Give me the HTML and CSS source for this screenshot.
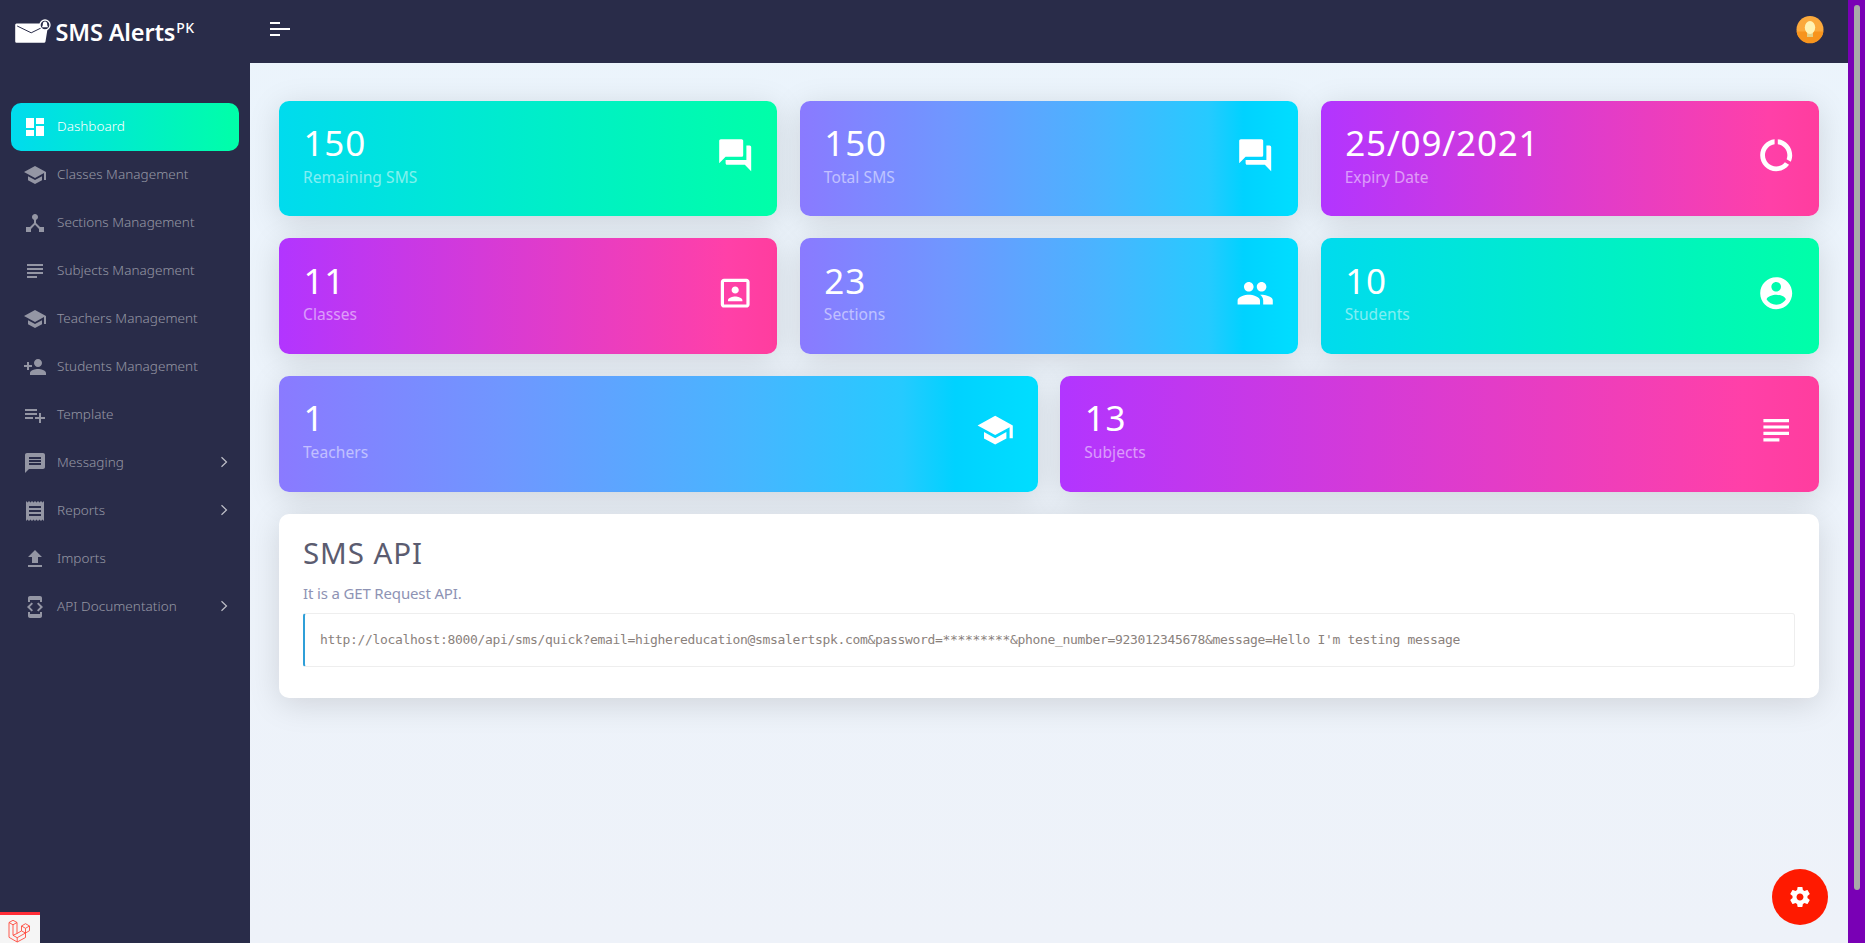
FILE: index.html
```html
<!DOCTYPE html>
<html lang="en">
<head>
<meta charset="utf-8">
<title>SMS Alerts PK</title>
<link rel="stylesheet" href="styles.css">
</head>
<body>
<svg class="defs" width="0" height="0">
  <symbol id="i-dashboard" viewBox="0 0 24 24"><path d="M3 13h8V3H3v10zm0 8h8v-6H3v6zm10 0h8V11h-8v10zm0-18v6h8V3h-8z"/></symbol>
  <symbol id="i-school" viewBox="0 0 24 24"><path d="M5 13.18v4L12 21l7-3.82v-4L12 17l-7-3.82zM12 3L1 9l11 6 9-4.91V17h2V9L12 3z"/></symbol>
  <symbol id="i-hub" viewBox="0 0 24 24"><path d="M17 16l-4-4V8.82C14.16 8.4 15 7.3 15 6c0-1.66-1.34-3-3-3S9 4.340 9 6c0 1.3.84 2.4 2 2.820V12l-4 4H3v5h5v-3.050l4-4.200 4 4.200V21h5v-5h-4z"/></symbol>
  <symbol id="i-subject" viewBox="0 0 24 24"><path d="M14 17H4v2h10v-2zm6-8H4v2h16V9zM4 15h16v-2H4v2zM4 5v2h16V5H4z"/></symbol>
  <symbol id="i-add-person" viewBox="0 0 24 24"><path d="M15 12c2.210 0 4-1.790 4-4s-1.790-4-4-4-4 1.790-4 4 1.790 4 4 4zm-9-2V7H4v3H1v2h3v3h2v-3h3v-2H6zm9 4c-2.670 0-8 1.340-8 4v2h16v-2c0-2.660-5.330-4-8-4z"/></symbol>
  <symbol id="i-list-add" viewBox="0 0 24 24"><path d="M14 10H2v2h12v-2zm0-4H2v2h12V6zm4 8v-4h-2v4h-4v2h4v4h2v-4h4v-2h-4zM2 16h8v-2H2v2z"/></symbol>
  <symbol id="i-message" viewBox="0 0 24 24"><path d="M20 2H4c-1.100 0-1.990.9-1.990 2L2 22l4-4h14c1.100 0 2-.9 2-2V4c0-1.100-.9-2-2-2zm-2 12H6v-2h12v2zm0-3H6V9h12v2zm0-3H6V6h12v2z"/></symbol>
  <symbol id="i-receipt" viewBox="0 0 24 24"><path d="M18 17H6v-2h12v2zm0-4H6v-2h12v2zm0-4H6V7h12v2zM3 22l1.500-1.500L6 22l1.500-1.500L9 22l1.500-1.500L12 22l1.500-1.500L15 22l1.500-1.500L18 22l1.500-1.500L21 22V2l-1.500 1.500L18 2l-1.500 1.500L15 2l-1.500 1.500L12 2l-1.500 1.500L9 2 7.500 3.500 6 2 4.500 3.500 3 2v20z"/></symbol>
  <symbol id="i-upload" viewBox="0 0 24 24"><path d="M9 16h6v-6h4l-7-7-7 7h4zm-4 2h14v2H5z"/></symbol>
  <symbol id="i-devmode" viewBox="0 0 24 24"><path d="M7 5h10v2h2V3c0-1.100-.9-1.990-2-1.990L7 1c-1.100 0-2 .9-2 2v4h2V5zm8.410 11.590L20 12l-4.590-4.590L14 8.830 17.170 12 14 15.170l1.410 1.420zM10 15.170L6.830 12 10 8.830 8.590 7.410 4 12l4.590 4.590L10 15.170zM17 19H7v-2H5v4c0 1.100.9 2 2 2h10c1.100 0 2-.9 2-2v-4h-2v2z"/></symbol>
  <symbol id="i-chevron" viewBox="0 0 10 12"><path d="M2.500 1.200L7.500 6l-5 4.800" fill="none" stroke="currentColor" stroke-width="1.200"/></symbol>
  <symbol id="i-forum" viewBox="0 0 24 24"><path d="M21 6h-2v9H6v2c0 .55.45 1 1 1h11l4 4V7c0-.55-.45-1-1-1zm-4 6V3c0-.55-.45-1-1-1H3c-.55 0-1 .45-1 1v14l4-4h10c.55 0 1-.45 1-1z"/></symbol>
  <symbol id="i-usage" viewBox="0 0 24 24"><path d="M13 2.050v3.030c3.390.49 6 3.390 6 6.920 0 .9-.18 1.750-.48 2.540l2.600 1.530c.56-1.240.88-2.620.88-4.070 0-5.180-3.950-9.450-9-9.950zM12 19c-3.870 0-7-3.130-7-7 0-3.530 2.610-6.430 6-6.920V2.050c-5.060.5-9 4.760-9 9.950 0 5.520 4.470 10 9.990 10 3.310 0 6.240-1.610 8.060-4.090l-2.600-1.530C16.170 17.980 14.210 19 12 19z"/></symbol>
  <symbol id="i-portrait" viewBox="0 0 24 24"><path d="M12 12.250c1.240 0 2.250-1.010 2.250-2.250S13.240 7.750 12 7.750 9.750 8.760 9.750 10s1.010 2.250 2.250 2.250zm4.500 4c0-1.500-3-2.250-4.500-2.250s-4.500.75-4.500 2.250V17h9v-.75zM19 3H5c-1.100 0-2 .9-2 2v14c0 1.100.9 2 2 2h14c1.100 0 2-.9 2-2V5c0-1.100-.9-2-2-2zm0 16H5V5h14v14z"/></symbol>
  <symbol id="i-group" viewBox="0 0 24 24"><path d="M16 11c1.660 0 2.990-1.340 2.990-3S17.660 5 16 5c-1.660 0-3 1.340-3 3s1.340 3 3 3zm-8 0c1.660 0 2.990-1.340 2.990-3S9.660 5 8 5C6.340 5 5 6.340 5 8s1.340 3 3 3zm0 2c-2.330 0-7 1.170-7 3.500V19h14v-2.500c0-2.330-4.670-3.500-7-3.500zm8 0c-.29 0-.62.02-.97.05 1.160.84 1.970 1.970 1.970 3.450V19h6v-2.500c0-2.330-4.670-3.500-7-3.500z"/></symbol>
  <symbol id="i-account" viewBox="0 0 24 24"><path d="M12 2C6.480 2 2 6.480 2 12s4.480 10 10 10 10-4.480 10-10S17.520 2 12 2zm0 3c1.660 0 3 1.340 3 3s-1.340 3-3 3-3-1.340-3-3 1.340-3 3-3zm0 14.200c-2.500 0-4.710-1.280-6-3.220.03-1.990 4-3.080 6-3.080 1.990 0 5.970 1.090 6 3.080-1.290 1.940-3.500 3.220-6 3.220z"/></symbol>
  <symbol id="i-gear" viewBox="0 0 24 24"><path d="M19.430 12.980c.04-.32.07-.64.07-.98s-.03-.66-.07-.98l2.110-1.650c.19-.15.24-.42.12-.64l-2-3.460c-.12-.22-.39-.3-.61-.22l-2.490 1c-.52-.4-1.080-.73-1.690-.98l-.38-2.650C14.460 2.180 14.250 2 14 2h-4c-.25 0-.46.18-.49.42l-.38 2.650c-.61.25-1.170.59-1.690.98l-2.490-1c-.23-.09-.49 0-.61.22l-2 3.460c-.13.22-.07.49.12.64l2.110 1.650c-.04.32-.07.65-.07.98s.03.66.07.98l-2.110 1.650c-.19.15-.24.42-.12.64l2 3.460c.12.22.39.3.61.22l2.490-1c.52.4 1.080.73 1.690.98l.38 2.650c.03.24.24.42.49.42h4c.25 0 .46-.18.49-.42l.38-2.650c.61-.25 1.170-.59 1.690-.98l2.490 1c.23.09.49 0 .61-.22l2-3.460c.12-.22.07-.49-.12-.64l-2.110-1.650zM12 15.500c-1.930 0-3.500-1.570-3.500-3.500s1.570-3.500 3.500-3.500 3.500 1.570 3.500 3.500-1.570 3.500-3.500 3.500z"/></symbol>
</svg>

<div class="app">
  <aside class="sidebar">
    <div class="brand">
      <svg class="brand-mark" width="36" height="26" viewBox="0 0 36 26">
        <path d="M1.500 4.500h25a6 6 0 0 0 6 5.500l-2 12.500a1.500 1.500 0 0 1-1.500 1.200H1.500A1.300 1.300 0 0 1 .2 22.500V6a1.400 1.400 0 0 1 1.300-1.500z" fill="#fff"/>
        <path d="M2.200 7l14 6.800L27 8.500" fill="none" stroke="#292c49" stroke-width="1"/>
        <circle cx="30" cy="6" r="5" fill="#292c49" stroke="#fff" stroke-width="1.300"/>
        <path d="M30 2.500c1.500 0 2.200 1.200 2.200 3 0 1.200.4 2 1.200 2.800h-6.800c.8-.8 1.200-1.600 1.200-2.800 0-1.800.7-3 2.200-3z" fill="#fff"/>
      </svg>
      <span class="brand-name">SMS Alerts</span><span class="brand-sup">PK</span>
    </div>
    <nav class="menu">
      <a class="item active"><svg class="icon"><use href="#i-dashboard"/></svg><span>Dashboard</span></a>
      <a class="item"><svg class="icon"><use href="#i-school"/></svg><span>Classes Management</span></a>
      <a class="item"><svg class="icon"><use href="#i-hub"/></svg><span>Sections Management</span></a>
      <a class="item"><svg class="icon"><use href="#i-subject"/></svg><span>Subjects Management</span></a>
      <a class="item"><svg class="icon"><use href="#i-school"/></svg><span>Teachers Management</span></a>
      <a class="item"><svg class="icon"><use href="#i-add-person"/></svg><span>Students Management</span></a>
      <a class="item"><svg class="icon"><use href="#i-list-add"/></svg><span>Template</span></a>
      <a class="item"><svg class="icon"><use href="#i-message"/></svg><span>Messaging</span><svg class="chevron"><use href="#i-chevron"/></svg></a>
      <a class="item"><svg class="icon"><use href="#i-receipt"/></svg><span>Reports</span><svg class="chevron"><use href="#i-chevron"/></svg></a>
      <a class="item"><svg class="icon"><use href="#i-upload"/></svg><span>Imports</span></a>
      <a class="item"><svg class="icon"><use href="#i-devmode"/></svg><span>API Documentation</span><svg class="chevron"><use href="#i-chevron"/></svg></a>
    </nav>
  </aside>

  <div class="page">
    <header class="topbar">
      <div class="toggle"><i></i><i class="long"></i><i></i></div>
      <svg class="avatar" width="28" height="28" viewBox="0 0 28 28">
        <circle cx="14" cy="13.500" r="13.500" fill="#fba93c"/>
        <path d="M.6 15.500h26.800a13.500 13.500 0 0 1-26.800 0z" fill="#f7941d"/>
        <path d="M11 16.500h6V21h-6z" fill="#e3cf84"/>
        <ellipse cx="14" cy="11.500" rx="5.200" ry="6.500" fill="#fff2b3"/>
      </svg>
    </header>

    <main class="content">
      <section class="row">
        <div class="card green"><div><h2>150</h2><p>Remaining SMS</p></div><svg class="icon-lg"><use href="#i-forum"/></svg></div>
        <div class="card blue"><div><h2>150</h2><p>Total SMS</p></div><svg class="icon-lg"><use href="#i-forum"/></svg></div>
        <div class="card pink"><div><h2>25/09/2021</h2><p>Expiry Date</p></div><svg class="icon-lg"><use href="#i-usage"/></svg></div>
      </section>
      <section class="row">
        <div class="card pink"><div><h2>11</h2><p>Classes</p></div><svg class="icon-lg"><use href="#i-portrait"/></svg></div>
        <div class="card blue"><div><h2>23</h2><p>Sections</p></div><svg class="icon-lg"><use href="#i-group"/></svg></div>
        <div class="card green"><div><h2>10</h2><p>Students</p></div><svg class="icon-lg"><use href="#i-account"/></svg></div>
      </section>
      <section class="row">
        <div class="card blue"><div><h2>1</h2><p>Teachers</p></div><svg class="icon-lg"><use href="#i-school"/></svg></div>
        <div class="card pink"><div><h2>13</h2><p>Subjects</p></div><svg class="icon-lg"><use href="#i-subject"/></svg></div>
      </section>
      <section class="api">
        <h1>SMS API</h1>
        <p>It is a GET Request API.</p>
        <pre>http://localhost:8000/api/sms/quick?email=highereducation@smsalertspk.com&amp;password=*********&amp;phone_number=923012345678&amp;message=Hello I'm testing message</pre>
      </section>
    </main>
  </div>
  <div class="scroll"><div class="thumb"></div></div>
</div>

<button class="fab"><svg class="icon"><use href="#i-gear"/></svg></button>
<div class="debug">
  <svg width="23" height="24" viewBox="0 0 23 24" fill="none" stroke="#ff4a3d" stroke-width=".9" stroke-linejoin="round">
    <path d="M1 3.500l4-2.200 4 2.200v11l4.500-2.600V7l4-2.300 4 2.300v4.700l-4 2.300v4.500L9.200 23 1 18.300zM1 3.500l4 2.300 4-2.300M5 5.800v10.500l4.200 2.400 8.300-4.700M9.200 18.700V23M13.500 7l4 2.300 4-2.300M17.500 9.300V14M13.500 11.900l4 2.100M9 14.500l-4 1.800"/>
  </svg>
</div>
</body>
</html>
```
FILE: styles.css
```css
* { box-sizing: border-box; }
body {
  margin: 0;
  height: 943px;
  overflow: hidden;
  font-family: "Noto Sans", "Open Sans", sans-serif;
  background: linear-gradient(to bottom, #ebf4fc, #eef2f9);
}
h1, h2, p, pre { margin: 0; }
.defs { position: absolute; }
.app { display: flex; height: 943px; }

.sidebar { width: 250px; flex: none; background: #292c49; }
.brand { display: flex; height: 63px; padding: 19px 0 0 15px; color: #fff; }
.brand-mark { flex: none; margin-right: 4.500px; }
.brand-name { font: 600 23.500px/27px "Noto Sans", sans-serif; letter-spacing: -.15px; white-space: nowrap; }
.brand-sup { margin: -1px 0 0 1px; font: 500 14px/19px "Noto Sans", sans-serif; letter-spacing: .3px; }
.menu { display: flex; flex-direction: column; padding: 40px 11px 0; }
.item {
  display: flex;
  align-items: center;
  height: 48px;
  padding: 0 10.500px 0 12px;
  border-radius: 10px;
  color: rgba(255, 255, 255, .5);
  font-size: 13.500px;
  font-weight: 300;
  letter-spacing: .04px;
}
.item span { margin: -2px 0 0 10px; white-space: nowrap; }
.item.active { color: #fff; background: linear-gradient(to right, #00dbee, #00ffa8); }
.icon { width: 24px; height: 24px; fill: currentColor; flex: none; }
.chevron { width: 10px; height: 12px; margin: -3px 0 0 auto; color: rgba(255, 255, 255, .7); }

.page { flex: 1; min-width: 0; }
.topbar {
  display: flex;
  justify-content: space-between;
  height: 63px;
  padding: 16px 24.500px 0 20px;
  background: #292c49;
}
.toggle { display: flex; flex-direction: column; gap: 4px; padding-top: 6px; }
.toggle i { width: 10px; height: 2px; background: #fff; }
.toggle .long { width: 20px; }

.content { display: flex; flex-direction: column; gap: 21.900px; padding: 37.800px 29px 0; }
.row { display: flex; gap: 22.500px; }
.card {
  flex: 1;
  display: flex;
  justify-content: space-between;
  height: 115.700px;
  padding: 24px;
  border-radius: 10px;
  color: #fff;
  box-shadow: 0 6px 32px rgba(0, 0, 0, .13);
}
.green { background: linear-gradient(to right, #00dbee, #00ffa8); }
.blue { background: linear-gradient(to right, #8a7aff 0%, #6f97ff 30%, #48b5ff 61%, #26caff 82%, #00d2ff 89%, #00deff 100%); }
.pink { background: linear-gradient(to right, #b235ff 0%, #ff40a8 90%, #ff3d9e 100%); }
.card h2 { margin: -.600px 0 0 .5px; font-size: 35px; line-height: 38px; font-weight: 400; letter-spacing: .8px; }
.card p { margin-top: 1.500px; font-size: 15.500px; line-height: 26px; letter-spacing: .08px; opacity: .5; }
.icon-lg { width: 38.400px; height: 38.400px; margin: 11.300px -.600px 0 0; fill: #fff; }

.api {
  height: 184px;
  padding: 24px;
  border-radius: 10px;
  background: #fff;
  box-shadow: 0 6px 32px rgba(0, 0, 0, .13);
}
.api h1 { margin-top: -1px; font-size: 29.500px; line-height: 32px; font-weight: 400; letter-spacing: .9px; color: #5b5c70; }
.api p { margin-top: 12px; font-size: 15px; line-height: 24px; letter-spacing: -.15px; color: #8e93b4; }
.api pre {
  height: 54px;
  margin-top: 8px;
  padding: 0 15px;
  border: 1px solid #eee;
  border-left: 2px solid #2f9fd8;
  border-radius: 3px;
  font: 13px/52px "DejaVu Sans Mono", monospace;
  letter-spacing: -.327px;
  color: #8a817c;
}

.scroll { width: 17px; flex: none; padding: 5px 5px 0 6px; background: #7900b5; }
.thumb { height: 885px; border-radius: 3px; background: #a9a9a9; }

.fab {
  position: absolute;
  left: 1772px;
  top: 869px;
  display: grid;
  place-items: center;
  width: 56px;
  height: 56px;
  border: 0;
  border-radius: 50%;
  color: #fff;
  background: #ff1a00;
}
.debug {
  position: absolute;
  left: 0;
  bottom: 0;
  width: 40px;
  height: 31px;
  padding: 4px 0 0 8px;
  border-top: 3px solid #ff2d37;
  background: #f5f5f5;
}
```
